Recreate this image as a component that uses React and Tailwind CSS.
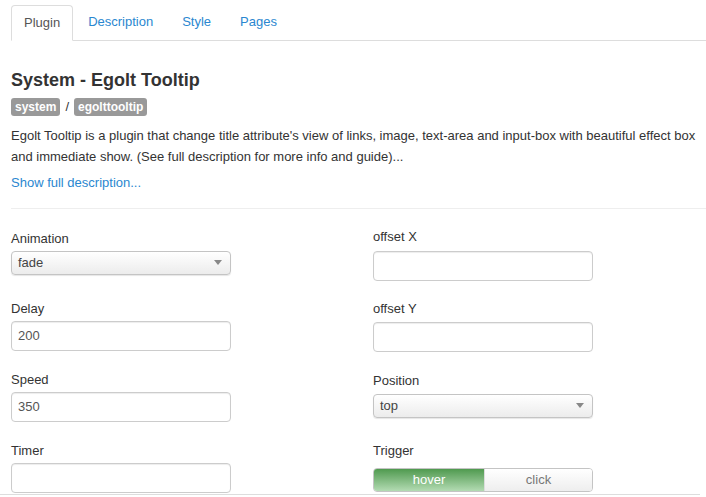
import React from "react";

const font = { fontFamily: '"Liberation Sans", Arial, sans-serif' };

function Label({ children }) {
  return <div className="h-[18px] leading-[18px] text-[13px] text-[#333]">{children}</div>;
}

function TextInput({ value }) {
  return (
    <div className="h-[30px] w-[220px] rounded-[4px] border border-[#ccc] bg-white px-[6px] text-[13px] leading-[28px] text-[#555] shadow-[inset_0_1px_1px_rgba(0,0,0,0.075)]">
      {value}
    </div>
  );
}

function Select({ value }) {
  return (
    <div className="flex h-[24px] w-[220px] items-center justify-between rounded-[4px] border border-[#c4c4c4] bg-gradient-to-b from-white to-[#ececec] pl-[6px] pr-[8px] text-[13px] text-[#444] shadow-[0_1px_1px_rgba(0,0,0,0.1)]">
      <span>{value}</span>
      <svg width="8" height="5" viewBox="0 0 8 5">
        <path d="M0 0 L8 0 L4 5 Z" fill="#888" />
      </svg>
    </div>
  );
}

export default function App() {
  return (
    <div className="h-[497px] w-[706px] overflow-hidden bg-white" style={font}>
      <div className="pl-[11px]">
        {/* Tabs */}
        <div className="mt-[5px] flex border-b border-[#ddd] text-[13px]">
          <div className="-mb-px rounded-t-[4px] border border-[#ddd] border-b-white bg-white px-[12px] py-[8px] leading-[18px] text-[#555]">
            Plugin
          </div>
          <div className="ml-[2px] px-[13px] py-[8px] leading-[18px] text-[#2a87d0]">Description</div>
          <div className="ml-[2px] px-[14px] py-[8px] leading-[18px] text-[#2a87d0]">Style</div>
          <div className="ml-[2px] px-[13px] py-[8px] leading-[18px] text-[#2a87d0]">Pages</div>
        </div>

        <h1 className="mt-[28px] text-[18px] font-bold leading-[22px] text-[#333]">System - Egolt Tooltip</h1>

        <div className="mt-[6px] flex items-center text-[12px]">
          <span className="rounded-[3px] bg-[#999] px-[4px] font-bold leading-[18px] text-white">system</span>
          <span className="mx-[5px] text-[13px] text-[#333]">/</span>
          <span className="rounded-[3px] bg-[#999] px-[4px] font-bold leading-[18px] text-white">egolttooltip</span>
        </div>

        <p className="mt-[8px] pr-[4px] text-[13px] leading-[21px] text-[#333]">
          Egolt Tooltip is a plugin that change title attribute's view of links, image, text-area and input-box with beautiful effect box and immediate show. (See full description for more info and guide)...
        </p>

        <div className="mt-[5px] text-[13px] leading-[21px] text-[#2a87d0]">Show full description...</div>

        <div className="mt-[15px] border-t border-[#eee]" />

        {/* Form */}
        <div className="mt-[19px] flex">
          <div className="w-[362px]">
            <div className="h-[71px] pt-[2px]">
              <Label>Animation</Label>
              <div className="mt-[3px]">
                <Select value="fade" />
              </div>
            </div>
            <div className="h-[71px] pt-[1px]">
              <Label>Delay</Label>
              <div className="mt-[3px]">
                <TextInput value="200" />
              </div>
            </div>
            <div className="h-[71px] pt-[1px]">
              <Label>Speed</Label>
              <div className="mt-[3px]">
                <TextInput value="350" />
              </div>
            </div>
            <div className="h-[71px] pt-[1px]">
              <Label>Timer</Label>
              <div className="mt-[3px]">
                <TextInput value="" />
              </div>
            </div>
          </div>
          <div>
            <div className="h-[72px]">
              <Label>offset X</Label>
              <div className="mt-[5px]">
                <TextInput value="" />
              </div>
            </div>
            <div className="h-[72px]">
              <Label>offset Y</Label>
              <div className="mt-[4px]">
                <TextInput value="" />
              </div>
            </div>
            <div className="h-[70px]">
              <Label>Position</Label>
              <div className="mt-[4px]">
                <Select value="top" />
              </div>
            </div>
            <div className="h-[72px]">
              <Label>Trigger</Label>
              <div className="mt-[8px] flex h-[24px] w-[220px] overflow-hidden rounded-[4px] border border-[#c4c4c4] text-[13px]">
                <div className="flex w-[110px] items-center justify-center bg-gradient-to-b from-[#4f9a4f] to-[#b3dbb3] text-white">
                  hover
                </div>
                <div className="flex flex-1 items-center justify-center border-l border-[#ddd] bg-gradient-to-b from-white to-[#eeeeee] text-[#777]">
                  click
                </div>
              </div>
            </div>
          </div>
        </div>
      </div>
      <div className="absolute left-0 top-[494px] w-[700px] border-t border-[#ddd]" />
    </div>
  );
}
